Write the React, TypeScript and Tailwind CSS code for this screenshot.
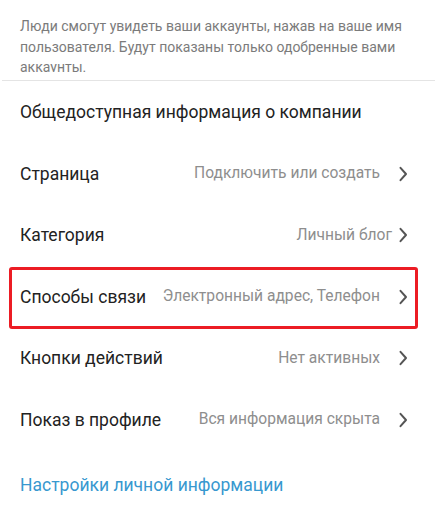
import React from "react";

const Chevron = () => (
  <svg width="10" height="16" viewBox="0 0 10 16" className="shrink-0">
    <path d="M2.5 1.8 L8 8 L2.5 14.2" fill="none" stroke="#555555" strokeWidth="2" strokeLinecap="round" strokeLinejoin="round" />
  </svg>
);

const rows = [
  { label: "Страница", value: "Подключить или создать", gap: "ml-[18px]" },
  { label: "Категория", value: "Личный блог", gap: "ml-[6px]" },
  { label: "Способы связи", value: "Электронный адрес, Телефон", gap: "ml-[18px]", boxed: true },
  { label: "Кнопки действий", value: "Нет активных", gap: "ml-[18px]" },
  { label: "Показ в профиле", value: "Вся информация скрыта", gap: "ml-[18px]" },
];

export default function App() {
  return (
    <div className="w-[437px] h-[512px] bg-white overflow-hidden" style={{ fontFamily: "Roboto, 'Noto Sans', sans-serif" }}>
      <div className="pl-5 pr-[10px] pt-[16px] h-[72px] overflow-hidden text-[14px] leading-[20.5px] text-[#7b7b7b]">
        Люди смогут увидеть ваши аккаунты, нажав на ваше имя пользователя. Будут показаны только одобренные вами аккаунты.
      </div>
      <div className="mt-[8px] mx-[2px] h-px bg-[#e4e4e4]" />
      <div className="h-[62px] flex items-center px-5 text-[17.5px] text-[#222222]">
        Общедоступная информация о компании
      </div>
      {rows.map((r) => (
        <div key={r.label} className="relative h-[61.5px] flex items-center pl-5 pr-[29px]">
          <span className="text-[17.5px] text-[#222222] shrink-0">{r.label}</span>
          <span className="flex-1" />
          <span className="text-[15.6px] text-[#8e8e8e] whitespace-nowrap">{r.value}</span>
          <span className={r.gap}>
            <Chevron />
          </span>
          {r.boxed && (
            <div className="absolute left-[9px] right-[19px] top-[1px] bottom-[-1px] border-[3px] border-[#ec1c24] rounded-[3px]" />
          )}
        </div>
      ))}
      <div className="px-5 pt-[21px] text-[17.5px] text-[#3798cf]">Настройки личной информации</div>
    </div>
  );
}
